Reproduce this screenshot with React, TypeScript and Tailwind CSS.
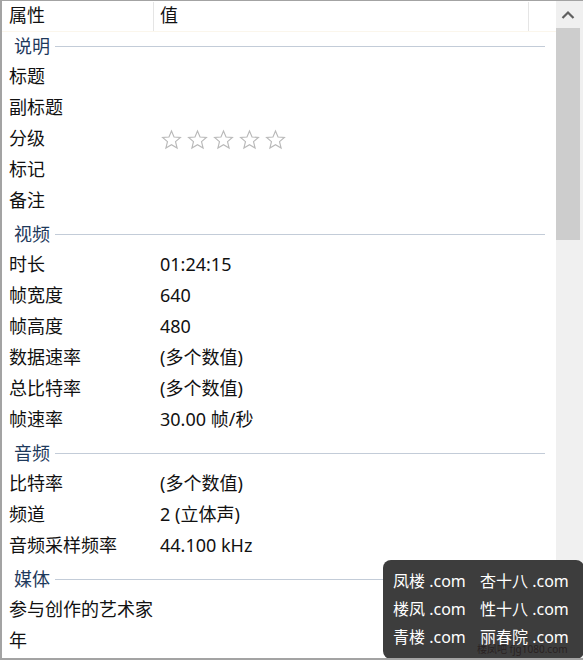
import React from "react";

const font = { fontFamily: '"Noto Sans", "Noto Sans CJK SC", sans-serif' };

type Row = { label: string; value?: React.ReactNode };
type Group = { title: string; rows: Row[] };

function Stars() {
  return (
    <div className="flex items-center gap-[5px] pl-[1px] pt-[2px]">
      {[0, 1, 2, 3, 4].map((i) => (
        <svg key={i} width="21" height="21" viewBox="0 0 24 24" fill="none">
          <path
            d="M12 2.2l2.9 6.9 7.3.6-5.6 4.8 1.8 7.2L12 17.9l-6.4 3.8 1.8-7.2L1.8 9.7l7.3-.6z"
            stroke="#b9b9b9"
            strokeWidth="1.3"
            strokeLinejoin="miter"
          />
        </svg>
      ))}
    </div>
  );
}

const groups: Group[] = [
  {
    title: "说明",
    rows: [
      { label: "标题" },
      { label: "副标题" },
      { label: "分级", value: <Stars /> },
      { label: "标记" },
      { label: "备注" },
    ],
  },
  {
    title: "视频",
    rows: [
      { label: "时长", value: "01:24:15" },
      { label: "帧宽度", value: "640" },
      { label: "帧高度", value: "480" },
      { label: "数据速率", value: "(多个数值)" },
      { label: "总比特率", value: "(多个数值)" },
      { label: "帧速率", value: "30.00 帧/秒" },
    ],
  },
  {
    title: "音频",
    rows: [
      { label: "比特率", value: "(多个数值)" },
      { label: "频道", value: "2 (立体声)" },
      { label: "音频采样频率", value: "44.100 kHz" },
    ],
  },
  {
    title: "媒体",
    rows: [{ label: "参与创作的艺术家" }, { label: "年" }],
  },
];

function GroupHeader({ title, first }: { title: string; first: boolean }) {
  return (
    <div
      className={
        first
          ? "flex items-center h-[30px] pb-[2px] pl-[12px] pr-[11px]"
          : "flex items-center h-[33px] pt-[1px] pl-[12px] pr-[11px]"
      }
    >
      <span className="text-[18px] leading-none text-[#1e395b]">{title}</span>
      <div className="flex-1 h-px bg-[#c3ccd8] ml-[5px] mt-[1px]" />
    </div>
  );
}

function DataRow({ row }: { row: Row }) {
  return (
    <div className="flex items-center h-[31px] pb-[3px] text-[18px] leading-none text-[#111]">
      <div className="w-[151px] pl-[7px] whitespace-nowrap">{row.label}</div>
      <div className="pl-[7px] whitespace-nowrap">{row.value}</div>
    </div>
  );
}

export default function App() {
  return (
    <div
      className="relative w-[583px] h-[660px] overflow-hidden bg-white border-t border-b-2 border-l-2 border-[#a3a3a3] flex"
      style={font}
    >
      <div className="w-[554px] flex flex-col">
        <div className="flex h-[31px] items-center text-[18px] leading-none text-[#111] border-b border-[#fbf6ec]">
          <div className="w-[151px] pl-[7px] pb-[2px] h-full flex items-center">属性</div>
          <div className="w-px h-[29px] bg-[#e5e5e5]" />
          <div className="w-[374px] pl-[6px] pb-[2px] h-full flex items-center">值</div>
          <div className="w-px h-[29px] bg-[#e5e5e5]" />
        </div>
        {groups.map((g, gi) => (
          <div key={g.title} className="flex flex-col">
            <GroupHeader title={g.title} first={gi === 0} />
            {g.rows.map((r) => (
              <DataRow key={r.label} row={r} />
            ))}
          </div>
        ))}
      </div>
      <div className="w-[27px] h-full bg-[#f0f0f0] flex flex-col pt-[1px]">
        <div className="w-[24px] h-[26px] bg-[#f0f0f0] flex items-center justify-center">
          <svg width="14" height="10" viewBox="0 0 14 10" fill="none">
            <path d="M1.5 8L7 2.5 12.5 8" stroke="#606060" strokeWidth="2.2" />
          </svg>
        </div>
        <div className="w-[24px] h-[212px] bg-[#cdcdcd]" />
      </div>

      <div className="absolute left-[381px] top-[559px] w-[201px] h-[99px] rounded-[8px] bg-[#3d3d3d] pt-[8px] pl-[10px] text-white text-[16px] leading-none">
        {[
          ["凤楼 .com", "杏十八 .com"],
          ["楼凤 .com", "性十八 .com"],
          ["青楼 .com", "丽春院 .com"],
        ].map(([a, b]) => (
          <div key={a} className="flex items-center h-[28px] pb-[2px]">
            <span className="w-[87px] whitespace-nowrap">{a}</span>
            <span className="whitespace-nowrap">{b}</span>
          </div>
        ))}
        <div className="absolute left-[94px] top-[84px] text-[10px] leading-none text-[#2a2222] whitespace-nowrap">
          楼凤吧 fjg1080.com
        </div>
      </div>
    </div>
  );
}
